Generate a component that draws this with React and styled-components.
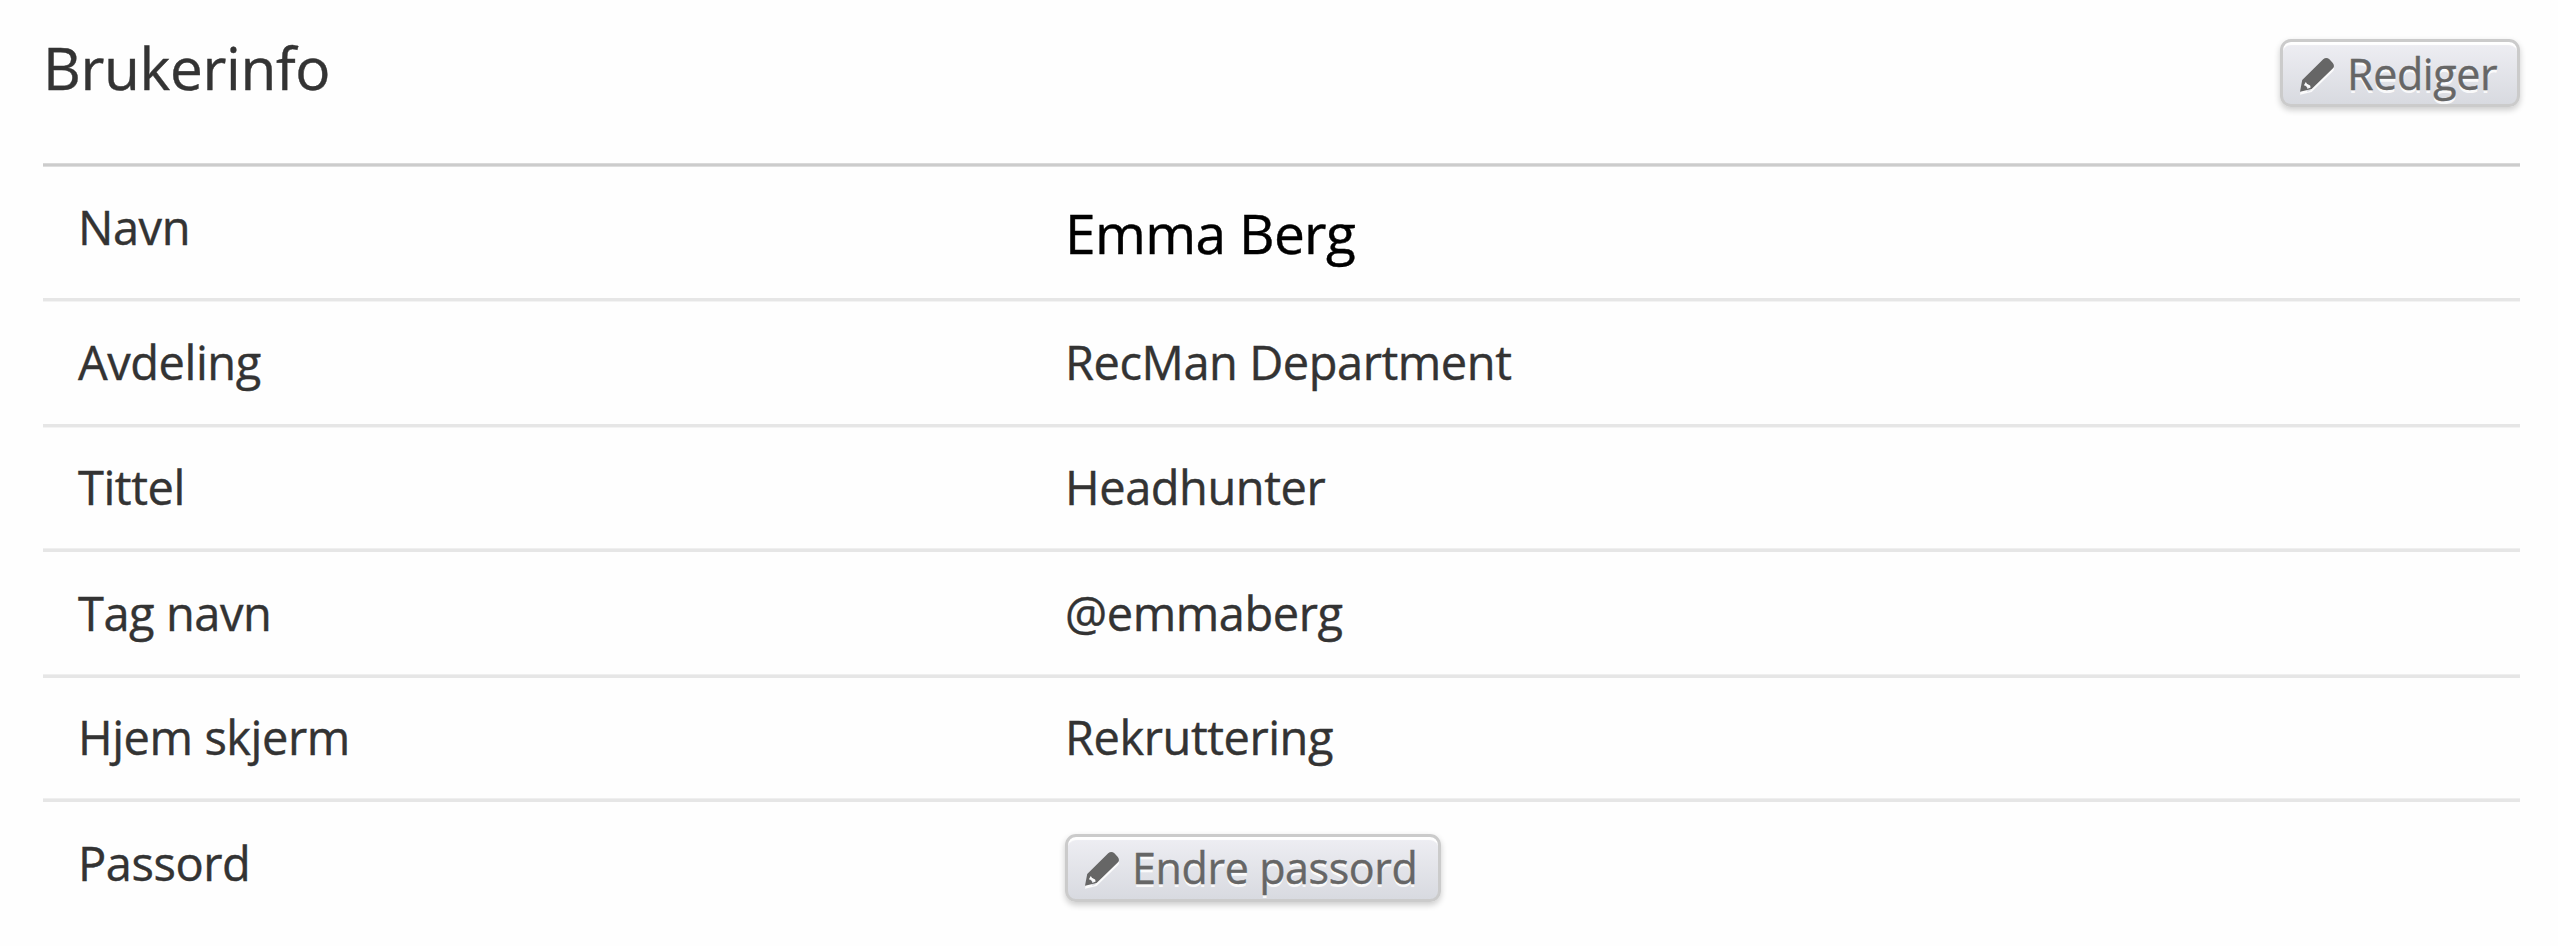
import React from 'react';
import styled, { createGlobalStyle } from 'styled-components';

const GlobalStyle = createGlobalStyle`
  body {
    margin: 0;
    background: #fefefe;
    font-family: 'Open Sans', sans-serif;
    color: #333;
    -webkit-text-stroke-width: 0.4px;
  }
`;

const Panel = styled.section`
  padding: 0 38px 0 43px;
`;

const Header = styled.header`
  display: flex;
  justify-content: space-between;
  align-items: flex-start;
  box-sizing: border-box;
  height: 167px;
  background: linear-gradient(#d9d9d9 1px, #ccc 1px, #ccc 3px, #dedede 3px) bottom / 100% 4px no-repeat;
`;

const Title = styled.h1`
  margin: 27px 0 0;
  font-size: 58.5px;
  line-height: 80px;
  font-weight: 400;
  letter-spacing: -0.35px;
`;

// $soft tells which edge of the divider is the lighter one
const dividers = {
  end: 'linear-gradient(#e6e6e6 3px, #f3f3f3 3px)',
  start: 'linear-gradient(#efefef 1px, #e6e6e6 1px)',
};

const Row = styled.div`
  display: flex;
  align-items: flex-start;
  box-sizing: border-box;
  height: ${({ $height }) => $height}px;
  padding: ${({ $top }) => $top || 28}px 0 0 35px;
  ${({ $soft }) => $soft && `background: ${dividers[$soft]} bottom / 100% 4px no-repeat;`}
`;

const Label = styled.div`
  width: 987px;
  font-size: 47px;
  line-height: 64px;
  letter-spacing: -0.45px;
`;

const Value = styled.div`
  font-size: 47px;
  line-height: 64px;
  letter-spacing: -0.45px;
`;

const Name = styled(Value)`
  font-size: 55px;
  line-height: 76px;
  letter-spacing: -0.65px;
  color: #000;
`;

const Button = styled.button`
  display: flex;
  align-items: center;
  box-sizing: border-box;
  width: ${({ $width }) => $width}px;
  height: 68px;
  margin-top: ${({ $top }) => $top}px;
  padding: ${({ $drop }) => $drop || 0}px 0 0 17px;
  gap: 13px;
  border: 3px solid #cbcbcb;
  border-radius: 11px;
  background: linear-gradient(#eeeef3, #d8dae0);
  box-shadow: 0 3px 6px rgba(0, 0, 0, 0.2), inset 0 4px 1px -1px #fff;
  font-family: inherit;
  font-size: 43px;
  line-height: 58px;
  letter-spacing: -0.38px;
  white-space: nowrap;
  color: #666;
  text-shadow: 0 3px 0 rgba(255, 255, 255, 0.85);
`;

const Icon = styled.svg`
  flex: none;
  width: 34px;
  height: 34px;
  margin-top: 2px;
  fill: #666;
  overflow: visible;
  filter: drop-shadow(0 3px 0 rgba(255, 255, 255, 0.85));
`;

const Pencil = () => (
  <Icon viewBox="0 0 34 34">
    <path
      fillRule="evenodd"
      d="M2.2 22 L23.2 1.2 Q26.3 -1.2 29.4 1.2 L32.8 5 Q35 8 33 10.2 L11.6 31 L0 33.8 Z M5.8 24 L3.9 27.3 Q6.8 27.8 7.4 31 L10.6 29.4 Q10.7 27.3 8.7 26.8 Q6.6 26.2 5.8 24 Z"
    />
  </Icon>
);

const App = () => (
  <>
    <GlobalStyle />
    <Panel>
      <Header>
        <Title>Brukerinfo</Title>
        <Button $width={240} $top={39} $drop={2}>
          <Pencil />
          Rediger
        </Button>
      </Header>
      <Row $height={135} $soft="end">
        <Label>Navn</Label>
        <Name>Emma Berg</Name>
      </Row>
      <Row $height={126} $soft="end">
        <Label>Avdeling</Label>
        <Value>RecMan Department</Value>
      </Row>
      <Row $height={124} $soft="start" $top={27}>
        <Label>Tittel</Label>
        <Value>Headhunter</Value>
      </Row>
      <Row $height={126} $soft="start" $top={29}>
        <Label>Tag navn</Label>
        <Value>@emmaberg</Value>
      </Row>
      <Row $height={124} $soft="start" $top={27}>
        <Label>Hjem skjerm</Label>
        <Value>Rekruttering</Value>
      </Row>
      <Row $height={125} $top={29}>
        <Label>Passord</Label>
        <Button $width={376} $top={3}>
          <Pencil />
          Endre passord
        </Button>
      </Row>
    </Panel>
  </>
);

export default App;
